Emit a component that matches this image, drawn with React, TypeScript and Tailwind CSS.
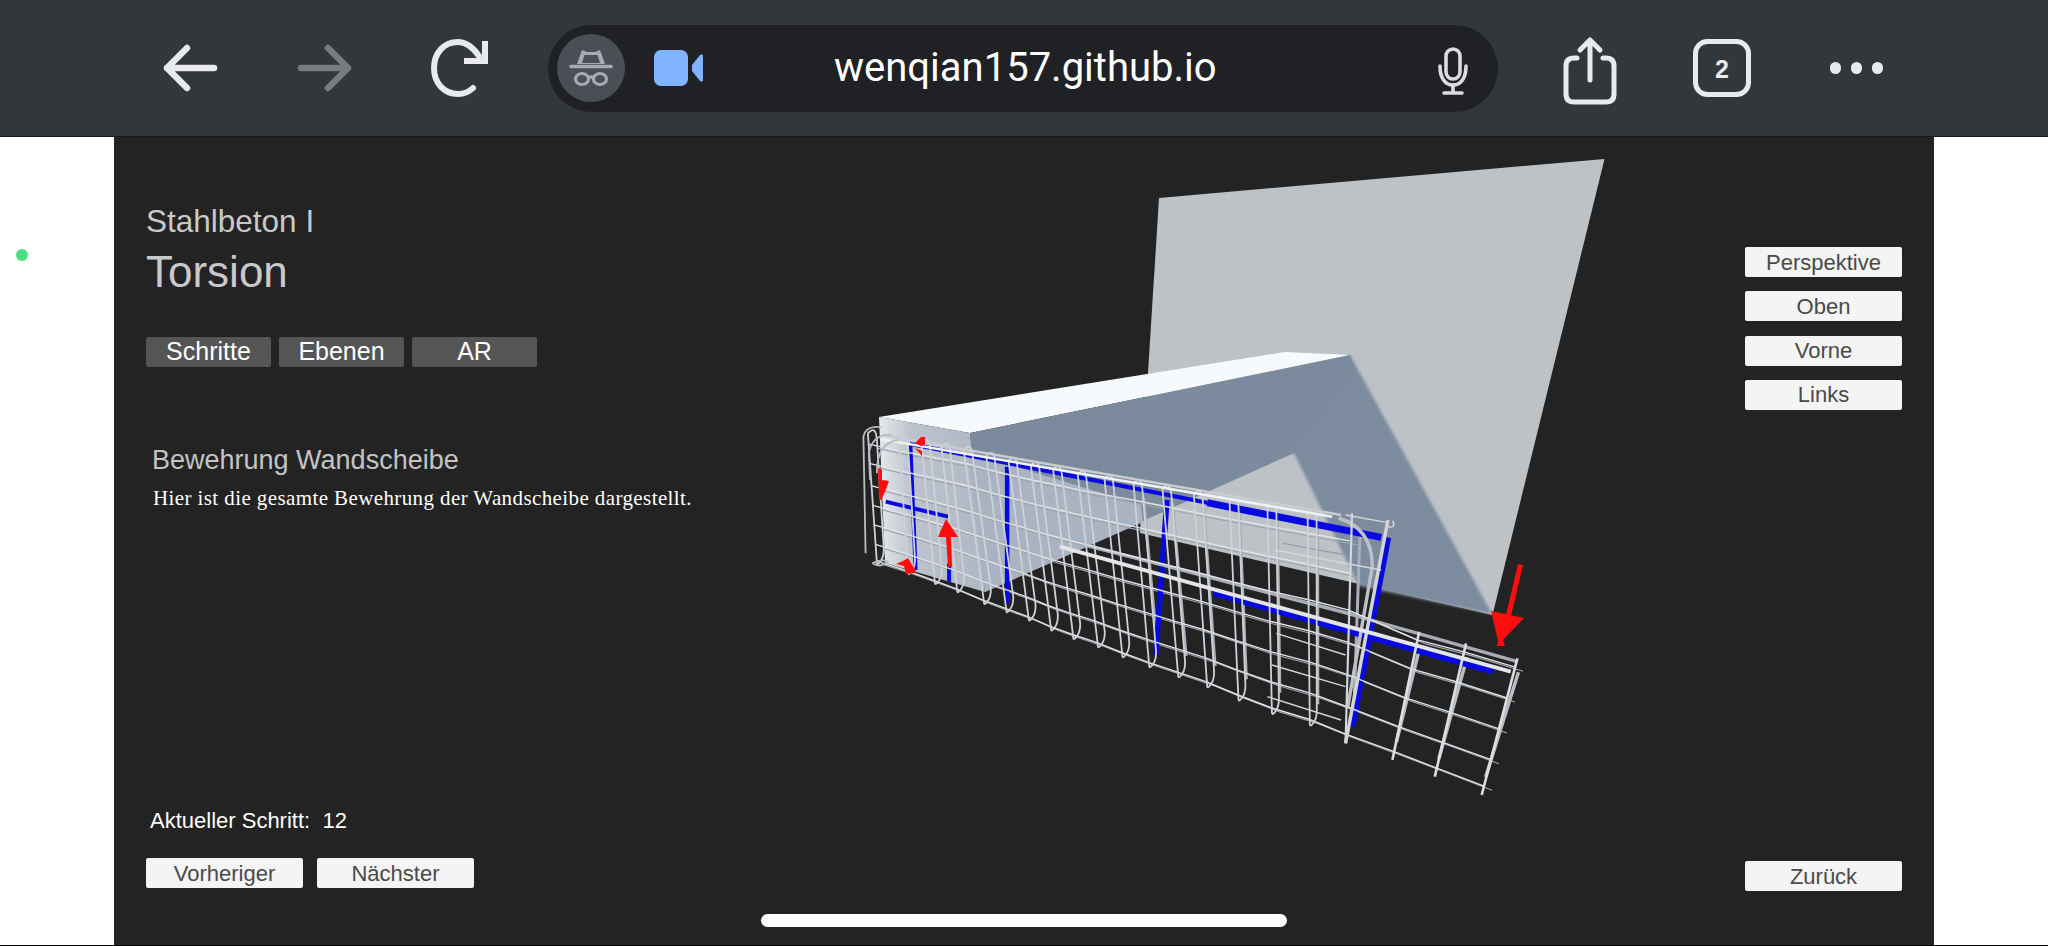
import React from "react";

const sans = { fontFamily: '"Liberation Sans", Arial, sans-serif' };

const P = (X: number, Y: number): [number, number] => [850 + X / 2.24, 340 + Y / 3];
const pt = (X: number, Y: number) => P(X, Y).map((v) => v.toFixed(1)).join(",");
const poly = (...pts: number[][]) => pts.map((p) => p.join(",")).join(" ");

const stirrups: number[][] = [
  [40, 262, 60, 680],
  [110, 282, 130, 710],
  [160, 292, 190, 740],
  [205, 302, 240, 765],
  [255, 312, 300, 800],
  [305, 330, 350, 825],
  [355, 345, 400, 850],
  [405, 358, 450, 880],
  [455, 370, 500, 905],
  [510, 385, 555, 930],
  [570, 398, 610, 960],
  [635, 412, 670, 990],
  [700, 428, 735, 1020],
  [770, 445, 800, 1050],
  [850, 462, 870, 1090],
  [935, 480, 945, 1130],
  [1025, 500, 1030, 1165],
  [1120, 520, 1110, 1210],
];
const outer: number[][] = [
  [1275, 875, 1215, 1260],
  [1380, 910, 1310, 1310],
  [1495, 955, 1415, 1365],
];

function stirrupPath(s: number[]) {
  const [tx, ty] = P(s[0], s[1]);
  const [bx, by] = P(s[2], s[3]);
  const f = (n: number) => n.toFixed(1);
  return `M${f(tx)},${f(ty + 6)} L${f(bx)},${f(by - 5)} Q${f(bx)},${f(by)} ${f(bx + 4)},${f(by - 6)} Q${f(bx + 7)},${f(by - 10)} ${f(bx + 7)},${f(by - 18)} L${f(tx + 9)},${f(ty + 13)} Q${f(tx + 8)},${f(ty - 3)} ${f(tx)},${f(ty + 6)}`;
}

function at(s: number[], t: number, ox = 0, oy = 0) {
  const [tx, ty] = P(s[0], s[1]);
  const [bx, by] = P(s[2], s[3]);
  return `${(tx + (bx - tx) * t + ox).toFixed(1)},${(ty + (by - ty) * t + oy).toFixed(1)}`;
}

function bar(t: number, ox: number, oy: number) {
  const main = stirrups.map((s) => at(s, t, ox, oy));
  const extra = t > 0.38 ? outer.map((s) => at(s, (t - 0.38) / 0.62, ox, oy)) : [];
  return [...main, ...extra].join(" ");
}

function Scene() {
  const ts = [0.12, 0.26, 0.42, 0.56, 0.7, 0.84, 0.96];
  return (
    <svg viewBox="850 140 760 680" className="w-[760px] h-[680px] shrink-0 mt-[3px]">
      <defs>
        <linearGradient id="front" x1="0" x2="1" y1="0" y2="0">
          <stop offset="0" stopColor="#e6e9ec" />
          <stop offset="0.3" stopColor="#bcc3cd" />
          <stop offset="1" stopColor="#aeb7c4" />
        </linearGradient>
        <filter id="soft"><feGaussianBlur stdDeviation="1.4" /></filter>
      </defs>
      {/* wall */}
      <polygon points="1159,198 1604.5,159 1492.5,615 1140,533 1148,373" fill="#bdc2c6" />
      {/* shadow cast on the wall */}
      <polygon points="1300,370 1350,355 1492,614 1359,586 1294,453 1270,460" fill="#7d8b9f" filter="url(#soft)" />
      {/* beam */}
      <polygon points="879,417 1285,352 1350,355 970,433" fill="#f7fafc" />
      <polygon points="970,433 1350,355 1356,372 1294,453 985,592" fill="#7c8a9d" />
      <polygon points="879,417 970,433 985,592 885,563" fill="url(#front)" />
      <polygon points="968,452 1141,505 1143,522 985,592" fill="#a9b3c1" />

      {/* rear cross bars */}
      {ts.map((t, i) => (
        <polyline key={i} points={bar(t, 8, 4)} fill="none" stroke="#9fa4ac" strokeWidth="1.1" />
      ))}

      {/* rear legs, right part */}
      {stirrups.slice(11).map((s, i) => {
        const [tx, ty] = P(s[0], s[1]);
        const [bx, by] = P(s[2], s[3]);
        return <line key={i} x1={tx + 10} y1={ty + 20} x2={bx + 8} y2={by - 24} stroke="#a9afb8" strokeWidth="3" />;
      })}
      {outer.map((s, i) => {
        const [tx, ty] = P(s[0], s[1]);
        const [bx, by] = P(s[2], s[3]);
        return <line key={i} x1={tx + 1} y1={ty + 14} x2={bx + 4} y2={by - 18} stroke="#b9bec6" strokeWidth="3.5" />;
      })}

      {/* blue bars */}
      <g stroke="#0808e0" fill="none">
        <polyline points={poly(P(135, 312), P(800, 488))} strokeWidth="4" />
        <polyline points={poly(P(800, 488), P(1190, 592))} strokeWidth="7" />
        <polyline points={poly(P(1205, 592), P(1125, 1160))} strokeWidth="6.5" />
        <polyline points={poly(P(135, 310), P(147, 690))} strokeWidth="4" />
        <polyline points={poly(P(352, 380), P(352, 790))} strokeWidth="4.5" />
        <polyline points={poly(P(710, 480), P(685, 945))} strokeWidth="5.5" />
        <polyline points={poly(P(80, 485), P(220, 530))} strokeWidth="4" />
        <polyline points={poly(P(222, 670), P(222, 725))} strokeWidth="4" />
        <polyline points={poly(P(815, 760), P(1440, 995))} strokeWidth="6" />
      </g>

      {/* gray rail behind */}
      <polyline points={poly(P(500, 605), P(1100, 815), P(1495, 965))} fill="none" stroke="#a9adb3" strokeWidth="3.5" />
      {/* corner bar */}
      <path d={`M${pt(1095, 535)} Q${pt(1170, 565)} ${pt(1170, 680)} L${pt(1115, 1100)}`} fill="none" stroke="#bcc0c6" strokeWidth="3.5" />

      {/* front cross bars */}
      {ts.map((t, i) => (
        <polyline key={i} points={bar(t, 0, 0)} fill="none" stroke="#e2e4e7" strokeWidth="1.4" />
      ))}
      <g stroke="#d4d6da" strokeWidth="1.4" fill="none">
        <polyline points={poly(P(955, 880), P(1110, 945))} />
        <polyline points={poly(P(945, 975), P(1110, 1040))} />
        <polyline points={poly(P(935, 1070), P(1100, 1140))} />
        <polyline points={poly(P(950, 630), P(1190, 690))} />
        <polyline points={poly(P(970, 610), P(1110, 645))} stroke="#9aa0a8" />
        <polyline points={poly(P(1110, 525), P(1205, 548))} />
      </g>

      {/* stirrups */}
      {stirrups.slice(0, 17).map((s, i) => (
        <path key={i} d={stirrupPath(s)} fill="none" stroke="#ced1d6" strokeWidth="1.8" />
      ))}
      <line x1={P(1120, 520)[0] + 2} y1={P(1120, 520)[1]} x2={P(1110, 1210)[0]} y2={P(1110, 1210)[1]} stroke="#d3d5d9" strokeWidth="2.2" />
      <line x1={P(1205, 540)[0]} y1={P(1205, 540)[1]} x2={P(1110, 1210)[0]} y2={P(1110, 1210)[1]} stroke="#d3d5d9" strokeWidth="3.5" />
      <path d={`M${pt(1205, 560)} q8,2 5,-6`} fill="none" stroke="#d3d5d9" strokeWidth="1.5" />
      {outer.map((s, i) => (
        <line key={i} x1={P(s[0], s[1])[0]} y1={P(s[0], s[1])[1]} x2={P(s[2], s[3])[0]} y2={P(s[2], s[3])[1]} stroke="#dcdee2" strokeWidth="2.6" />
      ))}

      {/* top rails */}
      <polyline points={poly(P(70, 285), P(1100, 525))} fill="none" stroke="#c9ccd0" strokeWidth="2.5" />
      <polyline points={poly(P(70, 298), P(1080, 530))} fill="none" stroke="#f0f1f3" strokeWidth="2.6" />
      <polyline points={poly(P(470, 620), P(1480, 995))} fill="none" stroke="#e3e5e8" strokeWidth="4" />

      {/* left end loops */}
      <g fill="none" stroke="#b9bdc3" strokeWidth="1.8">
        <path d={`M${pt(35, 640)} L${pt(30, 290)} Q${pt(35, 255)} ${pt(70, 262)}`} />
        <path d={`M${pt(45, 420)} L${pt(42, 340)} Q${pt(50, 280)} ${pt(95, 285)}`} />
        <path d={`M${pt(60, 400)} Q${pt(60, 305)} ${pt(110, 300)}`} />
        <path d={`M${pt(50, 670)} Q${pt(70, 655)} ${pt(85, 665)} Q${pt(70, 685)} ${pt(50, 670)}`} />
      </g>

      {/* red arrows */}
      <g fill="#ff0d0d">
        <polygon points="1518,564 1523,565 1511,616 1506,615" />
        <polygon points="1491,611 1524,618 1503,640 1505,646 1497,646 1498,641" />
        <polygon points="946,519 958,537 951,537 952,567 948,567 946,537 938,537" />
        <polygon points="878,468 882,470 882,480 889,481 885,492 881,500 879,499" />
        <polygon points="921,437 925,437 925,445 921,446 915,443" />
        <polygon points="915,448 922,451 922,456" />
        <polygon points="908,558 912,565 916,570 915,573 906,574 904,566 896,564 903,561" />
      </g>
    </svg>
  );
}

function Btn({ label, dark, className }: { label: string; dark?: boolean; className?: string }) {
  return (
    <button
      className={`h-[30px] rounded-[2px] flex items-center justify-center ${dark ? "w-[125px] bg-[#555555] text-white text-[25px]" : "w-[157px] bg-[#f4f4f4] text-[#4a4a4a] text-[22px]"} ${className ?? ""}`}
      style={sans}
    >
      {label}
    </button>
  );
}

function Header() {
  return (
    <div className="h-[136px] bg-[#34373a] flex items-center pl-[160px] shrink-0">
      <svg viewBox="160 0 64 136" className="w-[64px] h-[136px]" fill="none" stroke="#e8eaed" strokeWidth="6.5" strokeLinecap="round" strokeLinejoin="round">
        <path d="M214,68 H167 M187,48 L167,68 L187,88" />
      </svg>
      <svg viewBox="290 0 66 136" className="w-[66px] h-[136px] ml-[66px]" fill="none" stroke="#797c7f" strokeWidth="6.5" strokeLinecap="round" strokeLinejoin="round">
        <path d="M301,68 H348 M328,48 L348,68 L328,88" />
      </svg>
      <svg viewBox="428 0 64 136" className="w-[64px] h-[136px] ml-[72px]" fill="none" stroke="#e8eaed" strokeWidth="6" strokeLinecap="round" strokeLinejoin="miter">
        <path d="M479,56 C472,46 465,42 458,42 C444,42 434,53 434,68 C434,83 444,94 458,94 C464,94 469,92 473,88" />
        <path d="M464,61 H485 V41" strokeLinecap="butt" />
      </svg>
      <div className="ml-[56px] w-[950px] h-[87px] rounded-full bg-[#202124] flex items-center pl-[9px] pr-[28px] shrink-0">
        <div className="w-[68px] h-[68px] rounded-full bg-[#4b4f55] flex items-center justify-center shrink-0">
          <svg viewBox="0 0 44 54" className="w-[44px] h-[54px]" fill="none" stroke="#a7aaaf" strokeWidth="3.2">
            <path d="M8,23 L13,9 L18,11 H26 L31,9 L36,23 Z" fill="#a7aaaf" stroke="none" />
            <path d="M15.5,14 H28.5 L31,22 H13 Z" fill="#4b4f55" stroke="none" />
            <path d="M2,25.5 H42" strokeWidth="3.6" strokeLinecap="round" />
            <ellipse cx="13" cy="38" rx="6.5" ry="5.5" />
            <ellipse cx="31" cy="38" rx="6.5" ry="5.5" />
            <path d="M19,37 Q22,35 25,37" />
          </svg>
        </div>
        <svg viewBox="654 50 50 36" className="w-[50px] h-[36px] ml-[29px] shrink-0">
          <rect x="654" y="50" width="34" height="36" rx="7" fill="#7fb2ff" />
          <path d="M692,65 L700,55 Q703,53 703,57 V79 Q703,83 700,81 L692,71 Z" fill="#7fb2ff" />
        </svg>
        <span className="ml-[130px] text-[40px] leading-none text-white whitespace-nowrap" style={{ fontFamily: 'Roboto, "Liberation Sans", sans-serif' }}>
          wenqian157.github.io
        </span>
        <svg viewBox="1436 36 34 56" className="w-[34px] h-[56px] ml-auto shrink-0" fill="none" stroke="#dadce0" strokeWidth="3.6" strokeLinecap="round">
          <rect x="1446" y="45" width="14" height="30" rx="7" />
          <path d="M1440,62 C1440,74 1445,81 1453,81 C1461,81 1466,74 1466,62" />
          <path d="M1453,81 V88 M1444,89 H1462" strokeWidth="3.6" />
        </svg>
      </div>
      <svg viewBox="1560 0 60 136" className="w-[60px] h-[136px] ml-[62px]" fill="none" stroke="#e8eaed" strokeWidth="5" strokeLinecap="round" strokeLinejoin="round">
        <path d="M1577,58 H1574 Q1566,58 1566,66 V94 Q1566,102 1574,102 H1606 Q1614,102 1614,94 V66 Q1614,58 1606,58 H1603" />
        <path d="M1590,80 V40 M1580,50 L1590,40 L1600,50" />
      </svg>
      <svg viewBox="1690 0 66 136" className="w-[66px] h-[136px] ml-[69px]" fill="none">
        <rect x="1696.5" y="41.5" width="53" height="53" rx="12" stroke="#e8eaed" strokeWidth="5" />
        <text x="1723" y="78" textAnchor="middle" fill="#e8eaed" fontSize="25" fontWeight="700" style={sans}>2</text>
      </svg>
      <div className="ml-[75px] flex items-center gap-[10px]">
        <div className="w-[11px] h-[12px] rounded-full bg-[#e8eaed]" />
        <div className="w-[11px] h-[12px] rounded-full bg-[#e8eaed]" />
        <div className="w-[11px] h-[12px] rounded-full bg-[#e8eaed]" />
      </div>
    </div>
  );
}

export default function App() {
  return (
    <div className="relative w-[2048px] h-[946px] overflow-hidden bg-white flex flex-col" style={sans}>
      <Header />
      <div className="h-px bg-[#1a1a1a] shrink-0" />
      <div className="flex-1 flex min-h-0">
        <div className="w-[114px] shrink-0 pt-[112px] pl-[16px]">
          <div className="w-[12px] h-[12px] rounded-full bg-[#4ade80]" />
        </div>
        <div className="w-[1820px] bg-[#232323] flex shrink-0">
          <div className="w-[736px] shrink-0 flex flex-col pl-[32px]">
            <div className="mt-[65px] text-[31.5px] leading-[38px] text-[#c9c9c9]">Stahlbeton I</div>
            <div className="mt-[4px] text-[44px] leading-[56px] text-[#c9c9c9]">Torsion</div>
            <div className="mt-[37px] flex gap-[8px]">
              <Btn dark label="Schritte" />
              <Btn dark label="Ebenen" />
              <Btn dark label="AR" />
            </div>
            <div className="mt-[76px] ml-[6px] text-[27px] leading-[34px] text-[#c4c4c4]">Bewehrung Wandscheibe</div>
            <div className="mt-[8px] ml-[7px] text-[21px] tracking-[0.4px] leading-[26px] text-white whitespace-nowrap" style={{ fontFamily: '"Liberation Serif", serif' }}>
              Hier ist die gesamte Bewehrung der Wandscheibe dargestellt.
            </div>
            <div className="mt-auto ml-[4px] text-[22px] leading-[28px] text-white whitespace-pre">Aktueller Schritt:  12</div>
            <div className="mt-[23px] mb-[57px] flex gap-[14px]">
              <Btn label="Vorheriger" />
              <Btn label="Nächster" />
            </div>
          </div>
          <Scene />
          <div className="flex-1 flex flex-col items-end pr-[32px] pt-[110px] pb-[54px]">
            <div className="flex flex-col gap-[14.3px]">
              <Btn label="Perspektive" />
              <Btn label="Oben" />
              <Btn label="Vorne" />
              <Btn label="Links" />
            </div>
            <Btn label="Zurück" className="mt-auto" />
          </div>
        </div>
      </div>
      <div className="h-px bg-black shrink-0" />
      <div className="absolute left-[761px] top-[914px] w-[526px] h-[13px] rounded-full bg-white" />
    </div>
  );
}
